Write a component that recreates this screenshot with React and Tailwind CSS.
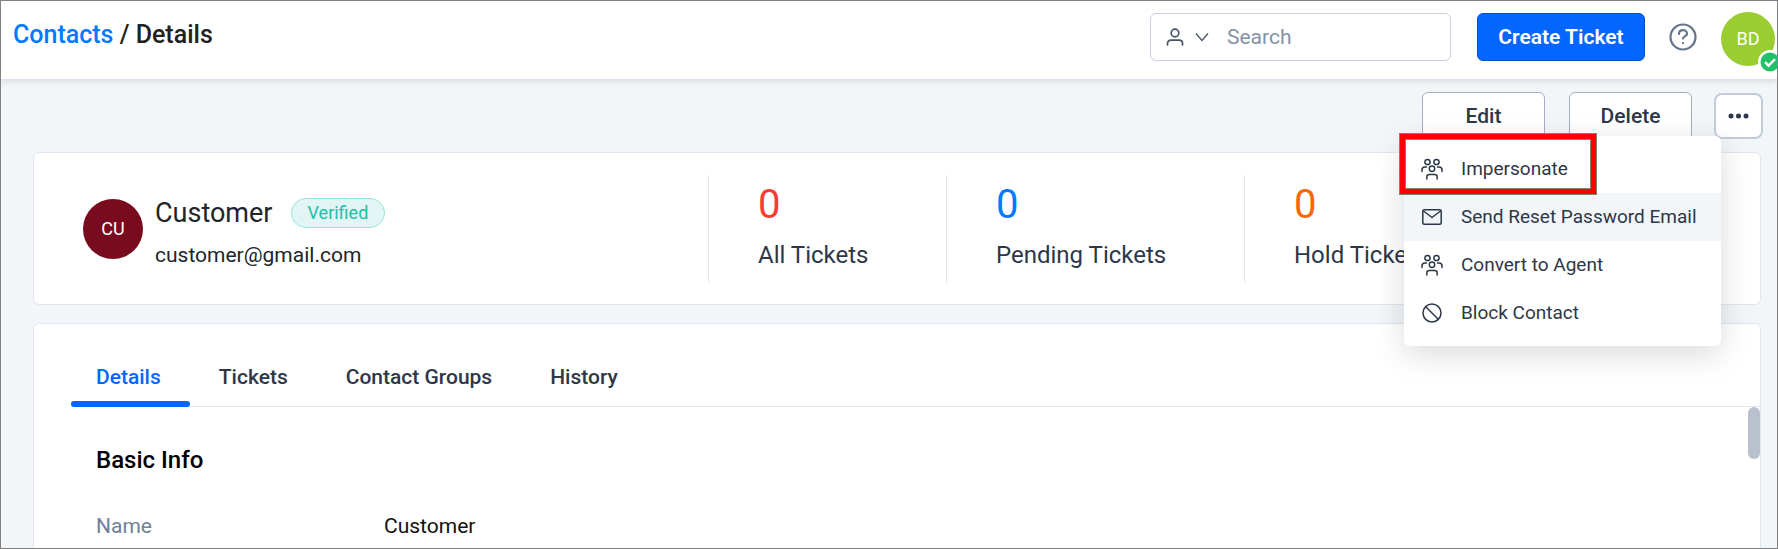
import { useState } from "react";

const stats = [
  { label: "All Tickets", value: 0, color: "text-[#ff3b30]", width: "w-[238px]" },
  { label: "Pending Tickets", value: 0, color: "text-[#007bff]", width: "w-[298px]" },
  { label: "Hold Tickets", value: 0, color: "text-[#f76808]", width: "w-[516px]" },
];

const tabs = ["Details", "Tickets", "Contact Groups", "History"];

const menuItems = [
  { label: "Impersonate", Icon: PeopleIcon },
  { label: "Send Reset Password Email", Icon: MailIcon, active: true },
  { label: "Convert to Agent", Icon: PeopleIcon },
  { label: "Block Contact", Icon: BlockIcon },
];

function PeopleIcon() {
  return (
    <svg className="shrink-0" width="22" height="22" viewBox="0 0 22 22" fill="none" stroke="currentColor" strokeWidth="1.5" strokeLinecap="round" strokeLinejoin="round">
      <circle cx="6.5" cy="4" r="2.6" />
      <circle cx="15.5" cy="4" r="2.6" />
      <circle cx="11" cy="10.8" r="2.7" />
      <path d="M1 13.5v-1.500c0-1.700 1.300-3 3-3h1.500M21 13.500v-1.500c0-1.700-1.300-3-3-3h-1.500M5.800 21v-2c0-1.400 1.100-2.500 2.500-2.500h5.400c1.400 0 2.500 1.100 2.500 2.500v2" />
    </svg>
  );
}

function MailIcon() {
  return (
    <svg className="shrink-0" width="22" height="22" viewBox="0 0 22 22" fill="none" stroke="currentColor" strokeWidth="1.5" strokeLinecap="round" strokeLinejoin="round">
      <rect x="1.8" y="3.8" width="18.4" height="14.4" rx="1.5" />
      <path d="M2.5 5l8.500 6.500L19.500 5" />
    </svg>
  );
}

function BlockIcon() {
  return (
    <svg className="shrink-0" width="22" height="22" viewBox="0 0 22 22" fill="none" stroke="currentColor" strokeWidth="1.5">
      <circle cx="11" cy="11" r="9" />
      <path d="M4.8 4.8l12.400 12.400" />
    </svg>
  );
}

function Header() {
  return (
    <header className="relative flex h-[79px] items-start justify-between border-b border-[#dde2ee] bg-white pt-3 pr-0.5 pl-3 shadow-[0_2px_6px_rgba(0,0,0,0.1)]">
      <nav aria-label="Breadcrumb" className="pt-2 text-[25px] leading-7 font-medium text-[#212121]">
        <a href="#contacts" className="text-[#007bff]">Contacts</a> / Details
      </nav>
      <div className="flex items-start">
        <div className="flex h-12 w-[301px] items-center rounded-md border border-[#cbd2e1] px-3 text-[#475467]">
          <button type="button" aria-label="Search in contacts" className="flex items-center gap-2">
            <svg width="24" height="24" viewBox="0 0 24 24" fill="none" stroke="currentColor" strokeWidth="1.7" strokeLinecap="round">
              <circle cx="12" cy="8" r="3.8" />
              <path d="M4.500 20v-1.500C4.500 16.600 6 15.200 8 15.200h8c2 0 3.500 1.400 3.500 3.300V20" />
            </svg>
            <svg width="14" height="14" viewBox="0 0 14 14" fill="none" stroke="currentColor" strokeWidth="1.3">
              <path d="M1 3.500l6 7 6-7" />
            </svg>
          </button>
          <input type="text" aria-label="Search" placeholder="Search" className="ml-[18px] w-full min-w-0 pt-0.5 text-[21px] outline-none placeholder:text-[#8492a6]" />
        </div>
        <button type="button" className="ml-[26px] h-12 w-[168px] rounded-md border border-[#0052cc] bg-[#0566ff] pt-0.5 text-[21px] font-semibold text-white">
          Create Ticket
        </button>
        <button type="button" aria-label="Help" className="mt-[9px] ml-[23px] text-[#64748b]">
          <svg width="30" height="30" viewBox="0 0 30 30" fill="none" stroke="currentColor" strokeWidth="2.2" strokeLinecap="round">
            <circle cx="15" cy="15" r="12.5" />
            <path d="M11 12c0-2.300 1.700-3.800 4-3.800s4 1.500 4 3.500c0 2.600-4 2.600-4 4.800M15 21v.2" />
          </svg>
        </button>
        <button type="button" className="relative -mt-px ml-[23px] h-[54px] w-[54px] rounded-full bg-[#9acd32] text-lg text-white">
          BD
          <svg className="absolute top-[38px] left-[37px]" width="24" height="24" viewBox="0 0 24 24">
            <circle cx="12" cy="12" r="12" fill="#fff" />
            <circle cx="12" cy="12" r="9.5" fill="#22c069" />
            <path d="M7 12.200l3.500 3.500 6.500-6.500" fill="none" stroke="#fff" strokeWidth="2.4" />
          </svg>
        </button>
      </div>
    </header>
  );
}

function ActionMenu() {
  return (
    <div className="absolute top-14 right-10 z-10 w-[317px] rounded-md bg-white py-[9px] shadow-[0_8px_32px_rgba(0,0,0,0.15)]">
      {menuItems.map(({ label, Icon, active }) => (
        <button
          key={label}
          type="button"
          className={`flex h-12 w-full items-center gap-[18px] pl-[17px] text-left text-[19px] whitespace-nowrap text-[#2d3748] ${active ? "bg-[#f2f6f9]" : ""}`}
        >
          <Icon />
          {label}
        </button>
      ))}
      {/* highlight around the first entry */}
      <div className="pointer-events-none absolute -top-[3px] -left-[5px] h-[62px] w-[198px] border border-[#808080]">
        <div className="h-full border-[5px] border-[#ff0000]">
          <div className="h-full border border-[#808080]" />
        </div>
      </div>
    </div>
  );
}

export default function App() {
  const [tab, setTab] = useState("Details");

  return (
    <div className="flex h-screen flex-col overflow-hidden border border-[#808080] bg-[#f2f6f9] font-[Roboto,sans-serif] text-[#212529]">
      <Header />

      <main className="flex min-h-0 flex-1 flex-col pr-4 pl-8">
        <div className="relative flex justify-end pt-3">
          <button type="button" className="h-12 w-[123px] rounded-md border border-[#a3aec4] bg-white pt-0.5 text-[21px] font-medium text-[#2d3748]">Edit</button>
          <button type="button" className="ml-6 h-12 w-[123px] rounded-md border border-[#a3aec4] bg-white pt-0.5 text-[21px] font-medium text-[#2d3748]">Delete</button>
          <button type="button" aria-label="More actions" className="mt-px -mr-0.5 ml-[22px] flex h-[46px] w-[49px] items-center justify-center rounded-lg border-2 border-[#c3ccda] bg-white text-[#2d3748]">
            <svg width="22" height="6" viewBox="0 0 22 6" fill="currentColor">
              <circle cx="3" cy="3" r="2.5" />
              <circle cx="10.500" cy="3" r="2.5" />
              <circle cx="18" cy="3" r="2.5" />
            </svg>
          </button>
          <ActionMenu />
        </div>

        <section className="mt-3 flex h-[153px] shrink-0 items-center justify-between rounded-md border border-[#e0e6f0] bg-white pl-[49px]">
          <div className="flex items-center gap-3">
            <div className="flex h-[60px] w-[60px] items-center justify-center rounded-full bg-[#780c1e] text-lg text-white">CU</div>
            <div className="pt-2">
              <div className="flex items-center gap-[18px]">
                <h1 className="text-[27px] leading-8">Customer</h1>
                <span className="flex h-[30px] items-center rounded-full border border-[#96e6dc] bg-[#e1f6f4] px-4 text-lg text-[#20bfa9]">Verified</span>
              </div>
              <p className="mt-3 text-[21px] leading-7">customer@gmail.com</p>
            </div>
          </div>
          <dl className="flex">
            {stats.map((s) => (
              <div key={s.label} className={`flex h-[108px] flex-col-reverse justify-end border-l border-[#e0e6f0] pl-[49px] ${s.width}`}>
                <dt className="mt-3 text-2xl leading-8 text-[#2d3748]">{s.label}</dt>
                <dd className={`pt-2 text-[40px] leading-[44px] ${s.color}`}>{s.value}</dd>
              </div>
            ))}
          </dl>
        </section>

        <section className="mt-[18px] min-h-0 flex-1 rounded-t-md border border-b-0 border-[#e0e6f0] bg-white">
          <div role="tablist" className="ml-[37px] flex h-[83px] items-end gap-1 border-b border-[#e0e6f0]">
            {tabs.map((t) => (
              <button
                key={t}
                type="button"
                role="tab"
                aria-selected={tab === t}
                onClick={() => setTab(t)}
                className={`relative -mb-px h-[60px] pt-0.5 pr-[29px] pl-[25px] text-[21px] font-medium ${tab === t ? "text-[#0566ff]" : "text-[#2d3748]"}`}
              >
                {t}
                {tab === t && <span className="absolute inset-x-0 bottom-0 h-1.5 rounded-full bg-[#0566ff]" />}
              </button>
            ))}
          </div>
          <div className="relative pt-[37px] pl-[62px]">
            <div className="absolute top-0 right-0 h-[52px] w-3 rounded-full bg-[#b9c0ce]" />
            <h2 className="text-2xl leading-8 font-medium text-black">Basic Info</h2>
            <dl className="mt-9 flex text-[21px] leading-7">
              <dt className="w-72 text-[#718096]">Name</dt>
              <dd className="text-[#111111]">Customer</dd>
            </dl>
          </div>
        </section>
      </main>
    </div>
  );
}
